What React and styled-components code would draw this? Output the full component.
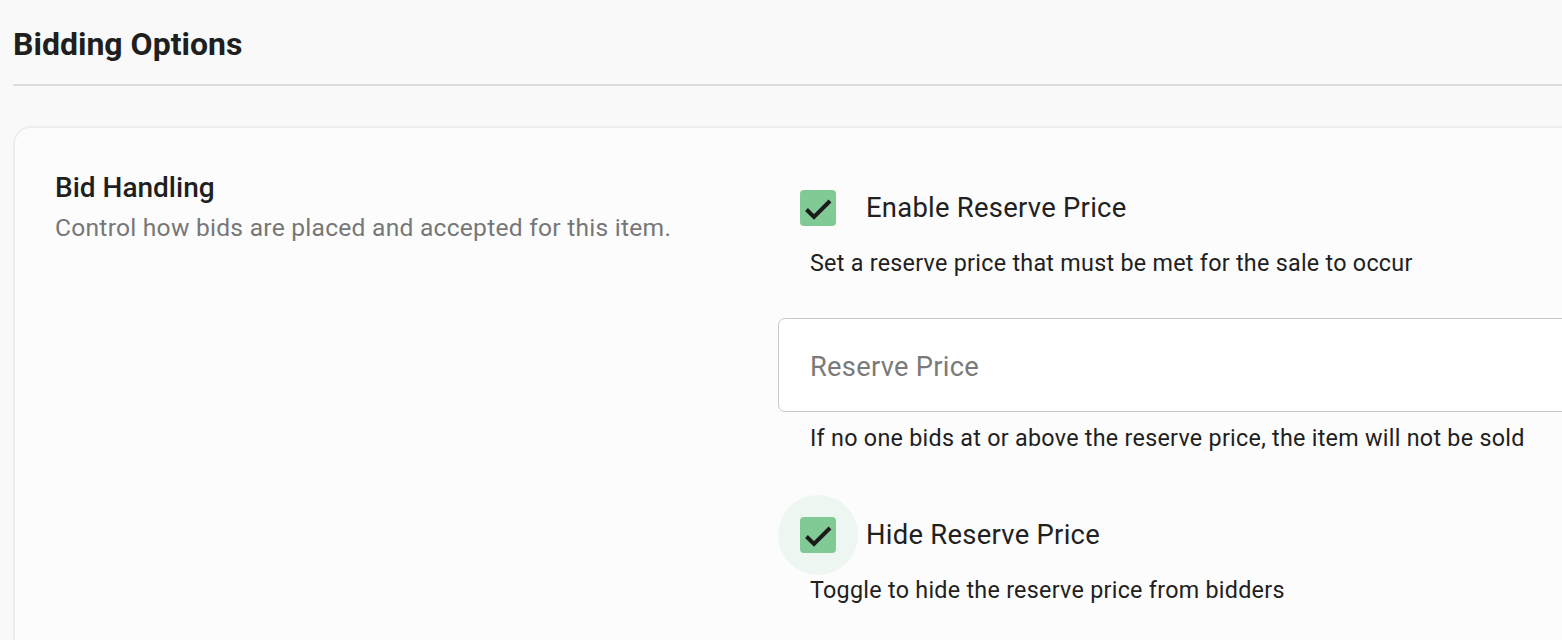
import React from "react";
import styled, { createGlobalStyle } from "styled-components";

const GlobalStyle = createGlobalStyle`
  html, body {
    margin: 0;
    padding: 0;
    background: #f9f9f9;
    overflow: hidden;
  }
  body {
    font-family: Roboto, "Noto Sans", Arial, sans-serif;
    color: #212121;
  }
`;

const Page = styled.div`
  width: 1800px;
  padding: 20px 0 0 13px;
  box-sizing: border-box;
`;

const Heading = styled.h1`
  margin: 0;
  font-size: 32px;
  line-height: 48px;
  font-weight: 700;
  color: #1f1f1f;
`;

const Divider = styled.hr`
  margin: 16px 0 40px;
  border: none;
  border-top: 2px solid #dddddd;
`;

const Card = styled.section`
  background: #fcfcfc;
  border: 2px solid #eeeeee;
  border-radius: 18px;
  padding: 40px;
  display: grid;
  grid-template-columns: 723px 1fr;
  min-height: 600px;
`;

const Intro = styled.div`
  display: flex;
  flex-direction: column;
  padding-top: 1px;
`;

const SectionTitle = styled.h2`
  margin: 0;
  font-size: 28px;
  line-height: 38px;
  font-weight: 500;
  color: #1f1f1f;
`;

const SectionText = styled.p`
  margin: 3px 0 0;
  font-size: 24.6px;
  line-height: 36px;
  color: #777777;
  letter-spacing: 0.01em;
`;

const Controls = styled.div`
  display: flex;
  flex-direction: column;
`;

const CheckRow = styled.label`
  display: flex;
  align-items: center;
  height: 80px;
  margin-top: ${(p) => p.$gap || 0}px;
  cursor: pointer;
`;

const CheckHalo = styled.span`
  width: 80px;
  height: 80px;
  border-radius: 50%;
  display: flex;
  align-items: center;
  justify-content: center;
  background: ${(p) => (p.$hover ? "#edf6f0" : "transparent")};
  flex-shrink: 0;
`;

const CheckBox = styled.span`
  width: 36px;
  height: 36px;
  border-radius: 4px;
  background: #81c995;
  display: flex;
  align-items: center;
  justify-content: center;
`;

const CheckLabel = styled.span`
  margin-left: 8px;
  font-size: 27.4px;
  letter-spacing: 0.01em;
  color: #212121;
`;

const Helper = styled.p`
  margin: ${(p) => p.$gap || 0}px 0 0;
  padding-left: 32px;
  font-size: 23.3px;
  line-height: 30px;
  letter-spacing: 0.012em;
  color: #212121;
`;

const Field = styled.input`
  margin-top: 40px;
  height: 94px;
  box-sizing: border-box;
  border: 1.5px solid #c8c8c8;
  border-radius: 7px;
  background: #ffffff;
  padding: 4px 31px 0;
  font-family: Roboto, "Noto Sans", Arial, sans-serif;
  font-size: 27.3px;
  letter-spacing: 0.01em;
  color: #212121;
  outline: none;
  &::placeholder {
    color: #7a7a7a;
  }
`;

const Check = () => (
  <svg width="36" height="36" viewBox="0 0 36 36">
    <polyline
      points="6.5,19.5 14,27 30,11"
      fill="none"
      stroke="#1b1b1b"
      strokeWidth="4"
    />
  </svg>
);

export default function App() {
  return (
    <>
      <GlobalStyle />
      <Page>
        <Heading>Bidding Options</Heading>
        <Divider />
        <Card>
          <Intro>
            <SectionTitle>Bid Handling</SectionTitle>
            <SectionText>Control how bids are placed and accepted for this item.</SectionText>
          </Intro>
          <Controls>
            <CheckRow>
              <CheckHalo>
                <CheckBox>
                  <Check />
                </CheckBox>
              </CheckHalo>
              <CheckLabel>Enable Reserve Price</CheckLabel>
            </CheckRow>
            <Helper>Set a reserve price that must be met for the sale to occur</Helper>
            <Field placeholder="Reserve Price" />
            <Helper $gap={11}>If no one bids at or above the reserve price, the item will not be sold</Helper>
            <CheckRow $gap={42}>
              <CheckHalo $hover>
                <CheckBox>
                  <Check />
                </CheckBox>
              </CheckHalo>
              <CheckLabel>Hide Reserve Price</CheckLabel>
            </CheckRow>
            <Helper>Toggle to hide the reserve price from bidders</Helper>
          </Controls>
        </Card>
      </Page>
    </>
  );
}
